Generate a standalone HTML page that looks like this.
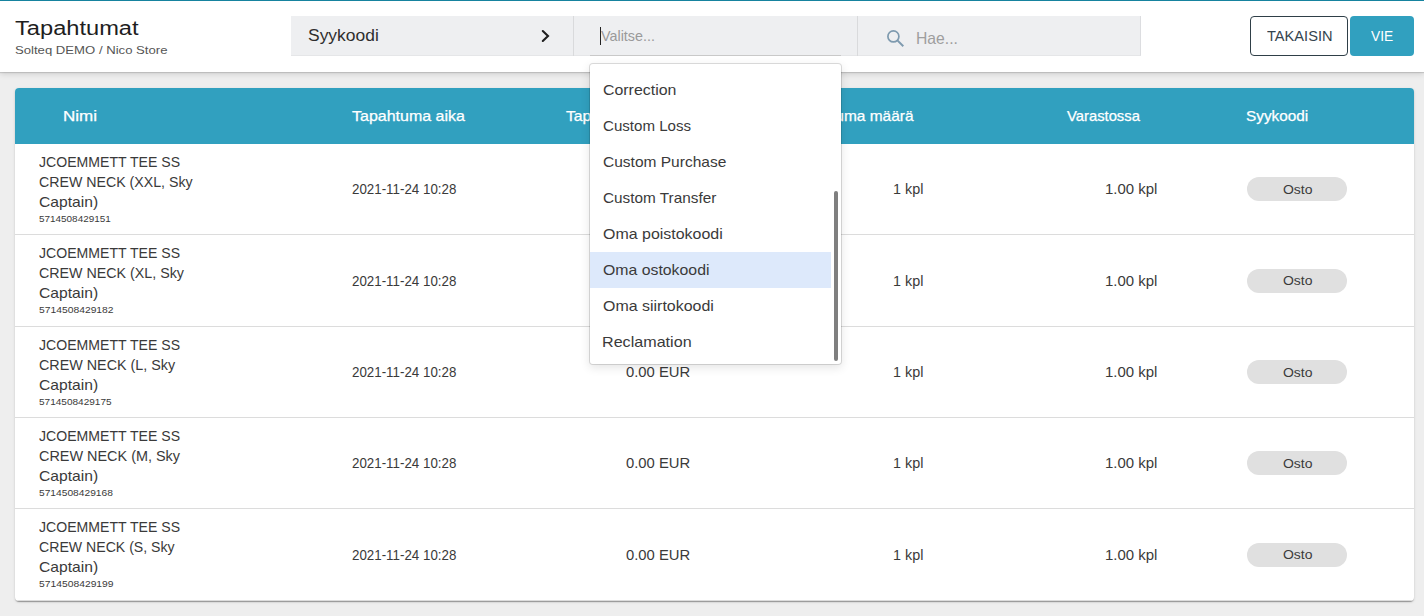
<!DOCTYPE html>
<html><head><meta charset="utf-8">
<style>
*{margin:0;padding:0;box-sizing:border-box}
html,body{width:1424px;height:616px;overflow:hidden;background:#eeeeee;font-family:"Liberation Sans",sans-serif;position:relative}
.a{position:absolute}
.t{position:absolute;white-space:nowrap;transform-origin:0 0}
#hdr{left:0;top:0;width:1424px;height:72px;background:#fff;border-top:1px solid #16839f;box-shadow:0 1px 1px rgba(0,0,0,.13),0 2px 6px rgba(0,0,0,.13);z-index:1}
#flt{left:291px;top:16px;width:850px;height:40px;background:#eeeff1;border-bottom:1px solid #e5e6e8;border-right:1px solid #dcdde0;z-index:2}
.vd{width:1px;top:16px;height:40px;background:#d9dadc;z-index:2}
#uline{left:590px;top:55px;width:251px;height:1px;background:#c9c9c9;z-index:2}
#cursor{left:600px;top:27px;width:1px;height:18px;background:#222;z-index:3}
#btn1{left:1250px;top:16px;width:98px;height:40px;border:1px solid #2f3f48;border-radius:4px;background:#fff;z-index:2}
#btn2{left:1350px;top:16px;width:64px;height:40px;border-radius:4px;background:#31a0bf;z-index:2}
#card{left:15px;top:88px;width:1399px;height:513px;background:#fff;border-radius:4px;box-shadow:0 2px 1px -1px rgba(0,0,0,.2),0 1px 1px 0 rgba(0,0,0,.14),0 1px 3px 0 rgba(0,0,0,.12);overflow:hidden;z-index:0}
#thead{left:0;top:0;width:1399px;height:56px;background:#31a0bf}
.sep{left:0;width:1399px;height:1px;background:#dcdcdc;z-index:1}
.chip{left:1247px;width:100px;height:24px;border-radius:12px;background:#e0e0e0;z-index:1}
#dd{left:589px;top:63px;width:253px;height:302px;background:#fff;background-clip:padding-box;border:1px solid rgba(0,0,0,.13);border-radius:4px;box-shadow:0 3px 10px rgba(0,0,0,.10);z-index:5}
#hl{left:590px;top:252px;width:241px;height:36px;background:#dde9fb;z-index:5}
#sb{left:834px;top:191px;width:4px;height:170px;background:#7f7f7f;border-radius:2px;z-index:6}
</style></head><body>
<div id="hdr" class="a"></div>
<div id="flt" class="a"></div>
<div class="a vd" style="left:573px"></div>
<div class="a vd" style="left:857px"></div>
<div id="uline" class="a"></div>
<div id="cursor" class="a"></div>
<svg class="a" style="left:538px;top:27px;z-index:3" width="14" height="18" viewBox="0 0 14 18"><path d="M4.8 4 L10 9 L4.8 14" fill="none" stroke="#1f1f1f" stroke-width="2.1" stroke-linecap="round" stroke-linejoin="miter"/></svg>
<svg class="a" style="left:884px;top:27px;z-index:3" width="24" height="24" viewBox="0 0 24 24"><circle cx="9.4" cy="9.4" r="5.5" fill="none" stroke="#7e9aaf" stroke-width="1.7"/><path d="M13.4 13.4 L19.3 19.3" stroke="#7e9aaf" stroke-width="2" stroke-linecap="butt"/></svg>
<div id="btn1" class="a"></div>
<div id="btn2" class="a"></div>
<div id="card" class="a"><div id="thead" class="a"></div>
<div class="a sep" style="top:146px"></div>
<div class="a sep" style="top:238px"></div>
<div class="a sep" style="top:329px"></div>
<div class="a sep" style="top:420px"></div>
<div class="a sep" style="top:512px"></div>
</div>
<div class="a chip" style="top:177px"></div>
<div class="a chip" style="top:269px"></div>
<div class="a chip" style="top:360px"></div>
<div class="a chip" style="top:451px"></div>
<div class="a chip" style="top:543px"></div>
<div id="dd" class="a"></div>
<div id="hl" class="a"></div>
<div id="sb" class="a"></div>
<span class="t" style="left:14.80px;top:18.01px;font-size:20px;line-height:20px;color:#1e1e1e;letter-spacing:0.000px;transform:scaleX(1.1824);z-index:2">Tapahtumat</span>
<span class="t" style="left:15.00px;top:45.00px;font-size:11.5px;line-height:11.5px;color:#555;letter-spacing:0.000px;transform:scaleX(1.1413);z-index:2">Solteq DEMO / Nico Store</span>
<span class="t" style="left:307.70px;top:28.01px;font-size:16.9px;line-height:16.9px;color:#2e2e2e;letter-spacing:0.000px;transform:scaleX(1.0327);z-index:2">Syykoodi</span>
<span class="t" style="left:601.00px;top:29.01px;font-size:14.2px;line-height:14.2px;color:#9a9a9a;letter-spacing:0.000px;transform:scaleX(1.0112);z-index:2">Valitse...</span>
<span class="t" style="left:916.05px;top:30.00px;font-size:16.5px;line-height:16.5px;color:#9e9e9e;letter-spacing:0.000px;transform:scaleX(0.9520);z-index:2">Hae...</span>
<span class="t" style="left:1266.50px;top:30.01px;font-size:13.8px;line-height:13.8px;color:#34444e;letter-spacing:0.000px;transform:scaleX(1.0595);z-index:2">TAKAISIN</span>
<span class="t" style="left:1371.00px;top:30.01px;font-size:13.8px;line-height:13.8px;color:#ffffff;letter-spacing:0.000px;transform:scaleX(0.9984);z-index:2">VIE</span>
<span class="t" style="left:62.50px;top:109.01px;font-size:14.2px;line-height:14.2px;color:#fff;letter-spacing:0.000px;transform:scaleX(1.1978);z-index:2;-webkit-text-stroke:0.25px currentColor">Nimi</span>
<span class="t" style="left:352.00px;top:109.01px;font-size:14.2px;line-height:14.2px;color:#fff;letter-spacing:0.000px;transform:scaleX(1.1269);z-index:2;-webkit-text-stroke:0.25px currentColor">Tapahtuma aika</span>
<span class="t" style="left:565.50px;top:109.01px;font-size:14.2px;line-height:14.2px;color:#fff;letter-spacing:0.000px;transform:scaleX(1.1095);z-index:2;-webkit-text-stroke:0.25px currentColor">Tapahtuma arvo</span>
<span class="t" style="left:789.00px;top:109.01px;font-size:14.2px;line-height:14.2px;color:#fff;letter-spacing:0.000px;transform:scaleX(1.0886);z-index:2;-webkit-text-stroke:0.25px currentColor">Tapahtuma määrä</span>
<span class="t" style="left:1067.00px;top:109.01px;font-size:14.2px;line-height:14.2px;color:#fff;letter-spacing:0.000px;transform:scaleX(1.0424);z-index:2;-webkit-text-stroke:0.25px currentColor">Varastossa</span>
<span class="t" style="left:1246.20px;top:109.01px;font-size:14.2px;line-height:14.2px;color:#fff;letter-spacing:0.000px;transform:scaleX(1.0798);z-index:2;-webkit-text-stroke:0.25px currentColor">Syykoodi</span>
<span class="t" style="left:39.00px;top:155.00px;font-size:14.1px;line-height:14.1px;color:#3a3a3a;letter-spacing:0.000px;transform:scaleX(0.9991);z-index:2">JCOEMMETT TEE SS</span>
<span class="t" style="left:39.00px;top:175.00px;font-size:14.1px;line-height:14.1px;color:#3a3a3a;letter-spacing:0.000px;transform:scaleX(1.0061);z-index:2">CREW NECK (XXL, Sky</span>
<span class="t" style="left:39.00px;top:195.00px;font-size:14.1px;line-height:14.1px;color:#3a3a3a;letter-spacing:0.000px;transform:scaleX(1.1107);z-index:2">Captain)</span>
<span class="t" style="left:39.00px;top:214.00px;font-size:9.8px;line-height:9.8px;color:#3a3a3a;letter-spacing:0.000px;transform:scaleX(1.0130);z-index:2">5714508429151</span>
<span class="t" style="left:352.00px;top:182.00px;font-size:14.1px;line-height:14.1px;color:#3a3a3a;letter-spacing:0.000px;transform:scaleX(0.9466);z-index:2">2021-11-24 10:28</span>
<span class="t" style="left:626.00px;top:182.00px;font-size:14.1px;line-height:14.1px;color:#3a3a3a;letter-spacing:0.000px;transform:scaleX(1.0505);z-index:2">0.00 EUR</span>
<span class="t" style="left:892.78px;top:182.00px;font-size:14.1px;line-height:14.1px;color:#3a3a3a;letter-spacing:0.000px;transform:scaleX(1.0196);z-index:2">1 kpl</span>
<span class="t" style="left:1104.94px;top:182.00px;font-size:14.1px;line-height:14.1px;color:#3a3a3a;letter-spacing:0.000px;transform:scaleX(1.0616);z-index:2">1.00 kpl</span>
<span class="t" style="left:1282.50px;top:184.01px;font-size:12.6px;line-height:12.6px;color:#3a3a3a;letter-spacing:0.000px;transform:scaleX(1.1094);z-index:2">Osto</span>
<span class="t" style="left:39.00px;top:246.00px;font-size:14.1px;line-height:14.1px;color:#3a3a3a;letter-spacing:0.000px;transform:scaleX(0.9991);z-index:2">JCOEMMETT TEE SS</span>
<span class="t" style="left:39.00px;top:266.00px;font-size:14.1px;line-height:14.1px;color:#3a3a3a;letter-spacing:0.000px;transform:scaleX(1.0114);z-index:2">CREW NECK (XL, Sky</span>
<span class="t" style="left:39.00px;top:286.00px;font-size:14.1px;line-height:14.1px;color:#3a3a3a;letter-spacing:0.000px;transform:scaleX(1.1107);z-index:2">Captain)</span>
<span class="t" style="left:39.00px;top:305.00px;font-size:9.8px;line-height:9.8px;color:#3a3a3a;letter-spacing:0.000px;transform:scaleX(1.0528);z-index:2">5714508429182</span>
<span class="t" style="left:352.00px;top:274.00px;font-size:14.1px;line-height:14.1px;color:#3a3a3a;letter-spacing:0.000px;transform:scaleX(0.9466);z-index:2">2021-11-24 10:28</span>
<span class="t" style="left:626.00px;top:274.00px;font-size:14.1px;line-height:14.1px;color:#3a3a3a;letter-spacing:0.000px;transform:scaleX(1.0505);z-index:2">0.00 EUR</span>
<span class="t" style="left:892.78px;top:274.00px;font-size:14.1px;line-height:14.1px;color:#3a3a3a;letter-spacing:0.000px;transform:scaleX(1.0196);z-index:2">1 kpl</span>
<span class="t" style="left:1104.94px;top:274.00px;font-size:14.1px;line-height:14.1px;color:#3a3a3a;letter-spacing:0.000px;transform:scaleX(1.0616);z-index:2">1.00 kpl</span>
<span class="t" style="left:1282.50px;top:275.01px;font-size:12.6px;line-height:12.6px;color:#3a3a3a;letter-spacing:0.000px;transform:scaleX(1.1094);z-index:2">Osto</span>
<span class="t" style="left:39.00px;top:338.00px;font-size:14.1px;line-height:14.1px;color:#3a3a3a;letter-spacing:0.000px;transform:scaleX(0.9991);z-index:2">JCOEMMETT TEE SS</span>
<span class="t" style="left:39.00px;top:358.00px;font-size:14.1px;line-height:14.1px;color:#3a3a3a;letter-spacing:0.000px;transform:scaleX(1.0166);z-index:2">CREW NECK (L, Sky</span>
<span class="t" style="left:39.00px;top:378.00px;font-size:14.1px;line-height:14.1px;color:#3a3a3a;letter-spacing:0.000px;transform:scaleX(1.1107);z-index:2">Captain)</span>
<span class="t" style="left:39.00px;top:397.00px;font-size:9.8px;line-height:9.8px;color:#3a3a3a;letter-spacing:0.000px;transform:scaleX(1.0241);z-index:2">5714508429175</span>
<span class="t" style="left:352.00px;top:365.00px;font-size:14.1px;line-height:14.1px;color:#3a3a3a;letter-spacing:0.000px;transform:scaleX(0.9466);z-index:2">2021-11-24 10:28</span>
<span class="t" style="left:626.00px;top:365.00px;font-size:14.1px;line-height:14.1px;color:#3a3a3a;letter-spacing:0.000px;transform:scaleX(1.0505);z-index:2">0.00 EUR</span>
<span class="t" style="left:892.78px;top:365.00px;font-size:14.1px;line-height:14.1px;color:#3a3a3a;letter-spacing:0.000px;transform:scaleX(1.0196);z-index:2">1 kpl</span>
<span class="t" style="left:1104.94px;top:365.00px;font-size:14.1px;line-height:14.1px;color:#3a3a3a;letter-spacing:0.000px;transform:scaleX(1.0616);z-index:2">1.00 kpl</span>
<span class="t" style="left:1282.50px;top:367.01px;font-size:12.6px;line-height:12.6px;color:#3a3a3a;letter-spacing:0.000px;transform:scaleX(1.1094);z-index:2">Osto</span>
<span class="t" style="left:39.00px;top:429.00px;font-size:14.1px;line-height:14.1px;color:#3a3a3a;letter-spacing:0.000px;transform:scaleX(0.9991);z-index:2">JCOEMMETT TEE SS</span>
<span class="t" style="left:39.00px;top:449.00px;font-size:14.1px;line-height:14.1px;color:#3a3a3a;letter-spacing:0.000px;transform:scaleX(1.0234);z-index:2">CREW NECK (M, Sky</span>
<span class="t" style="left:39.00px;top:469.00px;font-size:14.1px;line-height:14.1px;color:#3a3a3a;letter-spacing:0.000px;transform:scaleX(1.1107);z-index:2">Captain)</span>
<span class="t" style="left:39.00px;top:488.00px;font-size:9.8px;line-height:9.8px;color:#3a3a3a;letter-spacing:0.000px;transform:scaleX(1.0437);z-index:2">5714508429168</span>
<span class="t" style="left:352.00px;top:456.00px;font-size:14.1px;line-height:14.1px;color:#3a3a3a;letter-spacing:0.000px;transform:scaleX(0.9466);z-index:2">2021-11-24 10:28</span>
<span class="t" style="left:626.00px;top:456.00px;font-size:14.1px;line-height:14.1px;color:#3a3a3a;letter-spacing:0.000px;transform:scaleX(1.0505);z-index:2">0.00 EUR</span>
<span class="t" style="left:892.78px;top:456.00px;font-size:14.1px;line-height:14.1px;color:#3a3a3a;letter-spacing:0.000px;transform:scaleX(1.0196);z-index:2">1 kpl</span>
<span class="t" style="left:1104.94px;top:456.00px;font-size:14.1px;line-height:14.1px;color:#3a3a3a;letter-spacing:0.000px;transform:scaleX(1.0616);z-index:2">1.00 kpl</span>
<span class="t" style="left:1282.50px;top:458.01px;font-size:12.6px;line-height:12.6px;color:#3a3a3a;letter-spacing:0.000px;transform:scaleX(1.1094);z-index:2">Osto</span>
<span class="t" style="left:39.00px;top:520.00px;font-size:14.1px;line-height:14.1px;color:#3a3a3a;letter-spacing:0.000px;transform:scaleX(0.9991);z-index:2">JCOEMMETT TEE SS</span>
<span class="t" style="left:39.00px;top:540.00px;font-size:14.1px;line-height:14.1px;color:#3a3a3a;letter-spacing:0.000px;transform:scaleX(1.0013);z-index:2">CREW NECK (S, Sky</span>
<span class="t" style="left:39.00px;top:560.00px;font-size:14.1px;line-height:14.1px;color:#3a3a3a;letter-spacing:0.000px;transform:scaleX(1.1107);z-index:2">Captain)</span>
<span class="t" style="left:39.00px;top:579.00px;font-size:9.8px;line-height:9.8px;color:#3a3a3a;letter-spacing:0.000px;transform:scaleX(1.0528);z-index:2">5714508429199</span>
<span class="t" style="left:352.00px;top:548.00px;font-size:14.1px;line-height:14.1px;color:#3a3a3a;letter-spacing:0.000px;transform:scaleX(0.9466);z-index:2">2021-11-24 10:28</span>
<span class="t" style="left:626.00px;top:548.00px;font-size:14.1px;line-height:14.1px;color:#3a3a3a;letter-spacing:0.000px;transform:scaleX(1.0505);z-index:2">0.00 EUR</span>
<span class="t" style="left:892.78px;top:548.00px;font-size:14.1px;line-height:14.1px;color:#3a3a3a;letter-spacing:0.000px;transform:scaleX(1.0196);z-index:2">1 kpl</span>
<span class="t" style="left:1104.94px;top:548.00px;font-size:14.1px;line-height:14.1px;color:#3a3a3a;letter-spacing:0.000px;transform:scaleX(1.0616);z-index:2">1.00 kpl</span>
<span class="t" style="left:1282.50px;top:549.01px;font-size:12.6px;line-height:12.6px;color:#3a3a3a;letter-spacing:0.000px;transform:scaleX(1.1094);z-index:2">Osto</span>
<span class="t" style="left:602.80px;top:83.00px;font-size:14.1px;line-height:14.1px;color:#3a3a3a;letter-spacing:0.000px;transform:scaleX(1.1282);z-index:6">Correction</span>
<span class="t" style="left:602.80px;top:119.00px;font-size:14.1px;line-height:14.1px;color:#3a3a3a;letter-spacing:0.000px;transform:scaleX(1.0706);z-index:6">Custom Loss</span>
<span class="t" style="left:602.80px;top:155.00px;font-size:14.1px;line-height:14.1px;color:#3a3a3a;letter-spacing:0.000px;transform:scaleX(1.1010);z-index:6">Custom Purchase</span>
<span class="t" style="left:602.80px;top:191.00px;font-size:14.1px;line-height:14.1px;color:#3a3a3a;letter-spacing:0.000px;transform:scaleX(1.0876);z-index:6">Custom Transfer</span>
<span class="t" style="left:602.80px;top:227.00px;font-size:14.1px;line-height:14.1px;color:#3a3a3a;letter-spacing:0.000px;transform:scaleX(1.1323);z-index:6">Oma poistokoodi</span>
<span class="t" style="left:602.80px;top:263.00px;font-size:14.1px;line-height:14.1px;color:#3a3a3a;letter-spacing:0.000px;transform:scaleX(1.1230);z-index:6">Oma ostokoodi</span>
<span class="t" style="left:602.80px;top:299.00px;font-size:14.1px;line-height:14.1px;color:#3a3a3a;letter-spacing:0.000px;transform:scaleX(1.1322);z-index:6">Oma siirtokoodi</span>
<span class="t" style="left:602.36px;top:335.00px;font-size:14.1px;line-height:14.1px;color:#3a3a3a;letter-spacing:0.000px;transform:scaleX(1.1438);z-index:6">Reclamation</span>
</body></html>
